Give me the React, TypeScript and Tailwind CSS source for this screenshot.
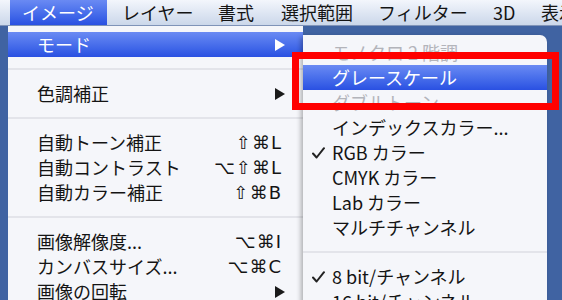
import React from "react";

type Row =
  | { kind: "sep" }
  | { kind: "item"; label: string; sc?: string; arrow?: boolean; hl?: boolean; dis?: boolean; check?: boolean };

const mainRows: Row[] = [
  { kind: "item", label: "モード", arrow: true, hl: true },
  { kind: "sep" },
  { kind: "item", label: "色調補正", arrow: true },
  { kind: "sep" },
  { kind: "item", label: "自動トーン補正", sc: "⇧⌘L" },
  { kind: "item", label: "自動コントラスト", sc: "⌥⇧⌘L" },
  { kind: "item", label: "自動カラー補正", sc: "⇧⌘B" },
  { kind: "sep" },
  { kind: "item", label: "画像解像度...", sc: "⌥⌘I" },
  { kind: "item", label: "カンバスサイズ...", sc: "⌥⌘C" },
  { kind: "item", label: "画像の回転", arrow: true },
];

const subRows: Row[] = [
  { kind: "item", label: "モノクロ 2 階調", dis: true },
  { kind: "item", label: "グレースケール", hl: true },
  { kind: "item", label: "ダブルトーン", dis: true },
  { kind: "item", label: "インデックスカラー..." },
  { kind: "item", label: "RGB カラー", check: true },
  { kind: "item", label: "CMYK カラー" },
  { kind: "item", label: "Lab カラー" },
  { kind: "item", label: "マルチチャンネル" },
  { kind: "sep" },
  { kind: "item", label: "8 bit/チャンネル", check: true },
  { kind: "item", label: "16 bit/チャンネル" },
];

function Arrow({ white }: { white?: boolean }) {
  return (
    <svg width="10" height="12" viewBox="0 0 10 12" className="shrink-0">
      <polygon points="0,0 10,6 0,12" fill={white ? "#ffffff" : "#1a1a1a"} />
    </svg>
  );
}

function Check() {
  return (
    <svg width="13" height="12" viewBox="0 0 13 12" className="shrink-0">
      <path d="M1 6.5 L4.6 10.5 L12 1.2" fill="none" stroke="#222" strokeWidth="2" strokeLinecap="round" strokeLinejoin="round" />
    </svg>
  );
}

function Sep() {
  return (
    <div className="h-[24px] flex items-center">
      <div className="h-[2px] w-full bg-[#e3e4ea]" />
    </div>
  );
}

const hlBg = "bg-gradient-to-b from-[#6a8af3] to-[#2a50e2]";

export default function App() {
  return (
    <div className="w-[562px] h-[300px] overflow-hidden relative bg-[#4063a2] font-['Noto_Sans_CJK_JP','DejaVu_Sans',sans-serif] text-[18px] text-[#141414]">
      {/* menu bar */}
      <div className="h-[26px] flex items-stretch overflow-hidden whitespace-nowrap bg-gradient-to-b from-[#f3f6fc] to-[#cbd7ea] border-b border-[#7f93b8]">
        <div className={`shrink-0 ml-[10px] w-[97px] pl-[12px] flex items-center text-white ${hlBg} leading-[25px]`}>イメージ</div>
        <div className="shrink-0 ml-[15px] w-[96px] flex items-center leading-[25px]">レイヤー</div>
        <div className="shrink-0 w-[63px] flex items-center leading-[25px]">書式</div>
        <div className="shrink-0 w-[97px] flex items-center leading-[25px]">選択範囲</div>
        <div className="shrink-0 w-[115px] flex items-center leading-[25px]">フィルター</div>
        <div className="shrink-0 w-[48px] flex items-center leading-[25px]">3D</div>
        <div className="shrink-0 flex items-center leading-[25px]">表示</div>
      </div>

      <div className="flex items-start">
        <div className="w-[8px] shrink-0" />
        {/* main menu */}
        <div className="shrink-0 w-[295px] h-[290px] bg-[#f5f6fa] pt-[6px]">
          {mainRows.map((r, i) =>
            r.kind === "sep" ? (
              <Sep key={i} />
            ) : (
              <div
                key={i}
                className={`h-[25px] flex items-center pl-[29px] pr-[18px] leading-[25px] ${r.hl ? `${hlBg} text-white` : ""}`}
              >
                <span className="flex-1 whitespace-nowrap">{r.label}</span>
                {r.sc && <span className="whitespace-nowrap pr-[3px] tracking-[1px] font-['DejaVu_Sans',sans-serif] text-[18px]">{r.sc}</span>}
                {r.arrow && <Arrow white={r.hl} />}
              </div>
            )
          )}
        </div>
        {/* submenu */}
        <div className="shrink-0 mt-[9px] w-[244px] h-[290px] bg-[#f5f6fa] rounded-tr-[7px] pt-[5px] shadow-[-2px_2px_5px_rgba(0,0,0,0.3)]">
          {subRows.map((r, i) =>
            r.kind === "sep" ? (
              <Sep key={i} />
            ) : (
              <div
                key={i}
                className={`h-[25px] flex items-center leading-[25px] ${r.hl ? `${hlBg} text-white` : ""} ${r.dis ? "text-[#b3b4ba]" : ""}`}
              >
                <span className="w-[29px] flex justify-center pl-[2px]">{r.check && <Check />}</span>
                <span className="whitespace-nowrap">{r.label}</span>
              </div>
            )
          )}
        </div>
      </div>

      {/* red annotation box */}
      <div className="absolute left-[292px] top-[52px] w-[267px] h-[58px] border-[7px] border-[#ff0000]" />
    </div>
  );
}
